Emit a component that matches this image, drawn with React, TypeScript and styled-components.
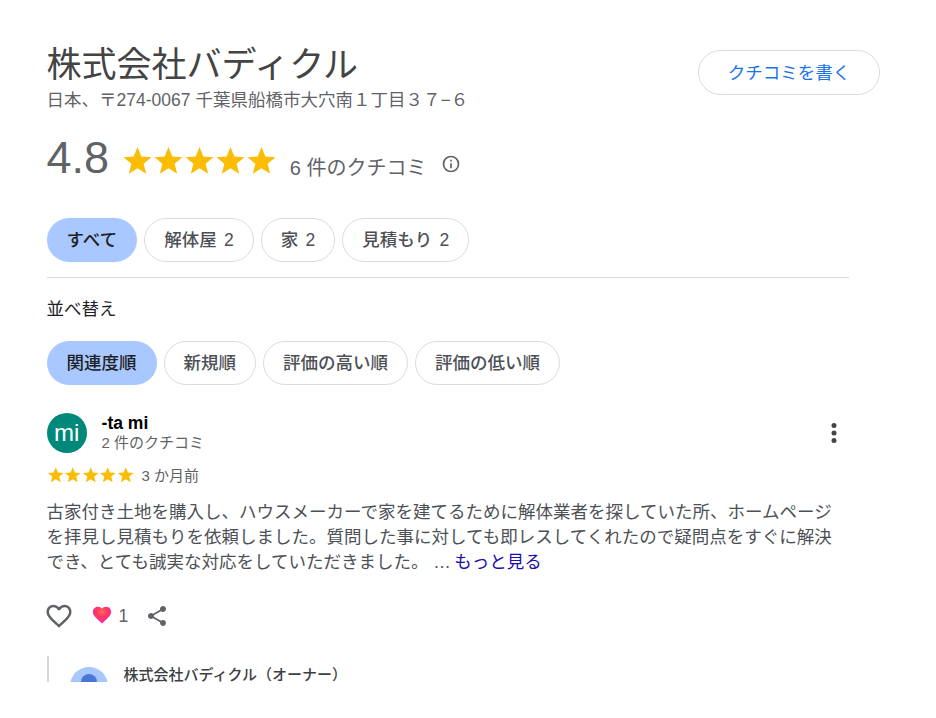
import React from "react";
import styled, { createGlobalStyle } from "styled-components";

const GlobalStyle = createGlobalStyle`
  html, body {
    margin: 0;
    padding: 0;
    background: #fff;
    font-family: "Liberation Sans", "Noto Sans CJK JP", sans-serif;
  }
`;

const Page = styled.div`
  width: 936px;
  padding: 40px 0 0 46.6px;
  box-sizing: border-box;
`;

const Content = styled.div`
  width: 802.4px;
`;

const Header = styled.div`
  display: flex;
  justify-content: space-between;
  align-items: flex-start;
  width: 833.4px;
`;

const Title = styled.div`
  font-size: 35px;
  line-height: 50px;
  color: #444;
`;

const Address = styled.div`
  font-size: 17.5px;
  line-height: 20px;
  color: #5f6368;
`;

const WriteButton = styled.button`
  width: 182px;
  height: 45px;
  margin-top: 10px;
  padding: 0 0 2px;
  border: 1px solid #dadce0;
  border-radius: 23px;
  background: #fff;
  color: #1a73e8;
  font: inherit;
  font-size: 17.5px;
`;

const Summary = styled.div`
  display: flex;
  align-items: center;
  margin-top: 23px;
  height: 50px;
`;

const Score = styled.div`
  font-size: 45px;
  color: #5f6368;
  margin-right: 12.7px;
`;

const CountText = styled.div`
  font-size: 20px;
  color: #5f6368;
  margin: 16px 14px 0 13px;
`;

const InfoIcon = styled.svg`
  margin-top: 12px;
`;

const Stars = styled.div`
  display: flex;
`;

const SummaryStars = styled(Stars)`
  margin-top: 4px;
`;

const Chips = styled.div`
  display: flex;
  gap: 7px;
`;

const FilterRow = styled(Chips)`
  margin-top: 35px;
  padding-bottom: 15px;
  border-bottom: 1px solid #dadce0;
`;

const Chip = styled.div<{ $active?: boolean }>`
  height: 44px;
  padding: 0 ${(p) => (p.$active ? 20 : 19)}px 3px;
  box-sizing: border-box;
  display: flex;
  align-items: center;
  border-radius: 22px;
  font-size: 17.5px;
  font-weight: 500;
  color: ${(p) => (p.$active ? "#202124" : "#4d5156")};
  background: ${(p) => (p.$active ? "#a8c8ff" : "#fff")};
  border: ${(p) => (p.$active ? "none" : "1px solid #dadce0")};
`;

const ChipCount = styled.span`
  margin-left: 7.3px;
  font-weight: 400;
`;

const SortLabel = styled.div`
  font-size: 17.5px;
  line-height: 22px;
  color: #202124;
  margin: 20px 0 21px;
`;

const Review = styled.div`
  margin-top: 28px;
`;

const ReviewerRow = styled.div`
  display: flex;
  align-items: center;
`;

const Avatar = styled.div`
  width: 40px;
  height: 40px;
  border-radius: 50%;
  background: #00897b;
  color: #fff;
  font-size: 24px;
  display: flex;
  align-items: center;
  justify-content: center;
`;

const ReviewerInfo = styled.div`
  flex: 1;
  margin-left: 15px;
`;

const ReviewerName = styled.div`
  font-size: 17.5px;
  font-weight: 700;
  line-height: 20px;
  color: #000;
`;

const ReviewerMeta = styled.div`
  font-size: 15px;
  line-height: 20px;
  color: #5f6368;
`;

const MoreButton = styled.div`
  display: flex;
`;

const RatingRow = styled.div`
  display: flex;
  align-items: center;
  margin-top: 11px;
`;

const DateText = styled.div`
  font-size: 15px;
  color: #5f6368;
  margin-left: 7.5px;
`;

const Body = styled.div`
  font-size: 17.5px;
  line-height: 25px;
  color: #4d5156;
  margin-top: 15px;
`;

const MoreLink = styled.span`
  color: #1a0dab;
  margin-left: -1.5px;
`;

const Actions = styled.div`
  display: flex;
  align-items: center;
  margin-top: 26px;
`;

const OutlineHeart = styled.svg`
  margin: 0 16.3px 0 -2.4px;
`;

const FilledHeart = styled.svg`
  margin-bottom: 2px;
`;

const LikeCount = styled.span`
  font-size: 17.5px;
  color: #5f6368;
  margin: 0 17px 0 6px;
`;

const Reply = styled.div`
  display: flex;
  gap: 16px;
  margin-top: 25px;
  height: 26px;
  border-left: 2px solid #d4d6d9;
  padding: 0 0 0 21px;
`;

const OwnerAvatarClip = styled.div`
  width: 38px;
  height: 26px;
  overflow: hidden;
  flex-shrink: 0;
`;

const OwnerAvatar = styled.div`
  width: 38px;
  height: 38px;
  margin-top: 11px;
  border-radius: 50%;
  background: #a8c7fa;
  display: flex;
  justify-content: center;
`;

const OwnerHead = styled.div`
  width: 16px;
  height: 16px;
  margin-top: 7px;
  border-radius: 50%;
  background: #4a76d6;
`;

const OwnerName = styled.div`
  font-size: 15px;
  font-weight: 500;
  line-height: 15px;
  color: #3c4043;
  margin-top: 11px;
`;

// regular five-point star, sharp tips, on a 24 unit box
const starPoints = Array.from({ length: 10 }, (_, i) => {
  const radius = i % 2 === 0 ? 11.4 : 5;
  const angle = (Math.PI / 5) * i - Math.PI / 2;
  return `${(12 + radius * Math.cos(angle)).toFixed(2)},${(13 + radius * Math.sin(angle)).toFixed(2)}`;
}).join(" ");

const Star: React.FC<{ size: number }> = ({ size }) => (
  <svg width={size} height={size} viewBox="0 0 24 24" fill="#fbbc04">
    <polygon points={starPoints} />
  </svg>
);

const StarRow: React.FC<{ size: number }> = ({ size }) => (
  <>
    {[0, 1, 2, 3, 4].map((i) => (
      <Star key={i} size={size} />
    ))}
  </>
);

const App: React.FC = () => {
  return (
    <Page>
      <GlobalStyle />
      <Content>
        <Header>
          <div>
            <Title>株式会社バディクル</Title>
            <Address>日本、〒274-0067 千葉県船橋市大穴南１丁目３７−６</Address>
          </div>
          <WriteButton>クチコミを書く</WriteButton>
        </Header>

        <Summary>
          <Score>4.8</Score>
          <SummaryStars>
            <StarRow size={31} />
          </SummaryStars>
          <CountText>6 件のクチコミ</CountText>
          <InfoIcon width="20" height="20" viewBox="0 0 24 24" fill="#5f6368">
            <path d="M11 7h2v2h-2zm0 4h2v6h-2zm1-9a10 10 0 100 20 10 10 0 000-20zm0 18a8 8 0 110-16 8 8 0 010 16z" />
          </InfoIcon>
        </Summary>

        <FilterRow>
          <Chip $active>すべて</Chip>
          <Chip><span>解体屋<ChipCount>2</ChipCount></span></Chip>
          <Chip><span>家<ChipCount>2</ChipCount></span></Chip>
          <Chip><span>見積もり<ChipCount>2</ChipCount></span></Chip>
        </FilterRow>

        <SortLabel>並べ替え</SortLabel>
        <Chips>
          <Chip $active>関連度順</Chip>
          <Chip>新規順</Chip>
          <Chip>評価の高い順</Chip>
          <Chip>評価の低い順</Chip>
        </Chips>

        <Review>
          <ReviewerRow>
            <Avatar>mi</Avatar>
            <ReviewerInfo>
              <ReviewerName>-ta mi</ReviewerName>
              <ReviewerMeta>2 件のクチコミ</ReviewerMeta>
            </ReviewerInfo>
            <MoreButton>
              <svg width="30" height="30" viewBox="0 0 24 24" fill="#444">
                <path d="M12 8a2 2 0 100-4 2 2 0 000 4zm0 2a2 2 0 100 4 2 2 0 000-4zm0 6a2 2 0 100 4 2 2 0 000-4z" />
              </svg>
            </MoreButton>
          </ReviewerRow>
          <RatingRow>
            <Stars>
              <StarRow size={17.5} />
            </Stars>
            <DateText>3 か月前</DateText>
          </RatingRow>
          <Body>
            古家付き土地を購入し、ハウスメーカーで家を建てるために解体業者を探していた所、ホームページを拝見し見積もりを依頼しました。質問した事に対しても即レスしてくれたので疑問点をすぐに解決でき、とても誠実な対応をしていただきました。 … <MoreLink>もっと見る</MoreLink>
          </Body>
          <Actions>
            <OutlineHeart width="30" height="30" viewBox="0 0 24 24" fill="#5f6368">
              <path d="M16.500 3c-1.740 0-3.410.81-4.500 2.090C10.910 3.810 9.240 3 7.500 3 4.420 3 2 5.420 2 8.500c0 3.780 3.400 6.860 8.550 11.540L12 21.350l1.450-1.320C18.600 15.360 22 12.280 22 8.500 22 5.420 19.580 3 16.500 3zm-4.400 15.550l-.1.100-.1-.1C7.140 14.240 4 11.390 4 8.500 4 6.500 5.500 5 7.500 5c1.540 0 3.040.99 3.570 2.360h1.870C13.460 5.990 14.960 5 16.500 5c2 0 3.500 1.500 3.500 3.500 0 2.890-3.140 5.740-7.900 10.050z" />
            </OutlineHeart>
            <FilledHeart width="22" height="22" viewBox="0 0 24 24">
              <defs>
                <radialGradient id="heartFill" cx="0.5" cy="0.3" r="0.7">
                  <stop offset="0" stopColor="#ff6a5a" />
                  <stop offset="0.4" stopColor="#fb3a5e" />
                  <stop offset="0.85" stopColor="#fb2aa8" />
                </radialGradient>
              </defs>
              <path fill="url(#heartFill)" d="M12 21.350l-1.450-1.320C5.400 15.360 2 12.280 2 8.500 2 5.420 4.420 3 7.500 3c1.740 0 3.410.81 4.500 2.090C13.090 3.810 14.760 3 16.500 3 19.580 3 22 5.420 22 8.500c0 3.780-3.400 6.860-8.550 11.540z" />
            </FilledHeart>
            <LikeCount>1</LikeCount>
            <svg width="24" height="24" viewBox="0 0 24 24" fill="#5f6368">
              <path d="M18 16.080c-.76 0-1.440.3-1.960.77L8.910 12.700c.05-.23.09-.46.09-.7s-.04-.47-.09-.7l7.050-4.110c.54.5 1.250.81 2.040.81 1.660 0 3-1.340 3-3s-1.340-3-3-3-3 1.340-3 3c0 .24.04.47.09.7L8.040 9.810C7.500 9.310 6.790 9 6 9c-1.660 0-3 1.340-3 3s1.340 3 3 3c.79 0 1.500-.31 2.040-.81l7.120 4.160c-.05.21-.08.43-.08.65 0 1.610 1.310 2.920 2.920 2.920s2.920-1.310 2.920-2.920-1.310-2.920-2.920-2.920z" />
            </svg>
          </Actions>
          <Reply>
            <OwnerAvatarClip>
              <OwnerAvatar>
                <OwnerHead />
              </OwnerAvatar>
            </OwnerAvatarClip>
            <OwnerName>株式会社バディクル（オーナー）</OwnerName>
          </Reply>
        </Review>
      </Content>
    </Page>
  );
};

export default App;
